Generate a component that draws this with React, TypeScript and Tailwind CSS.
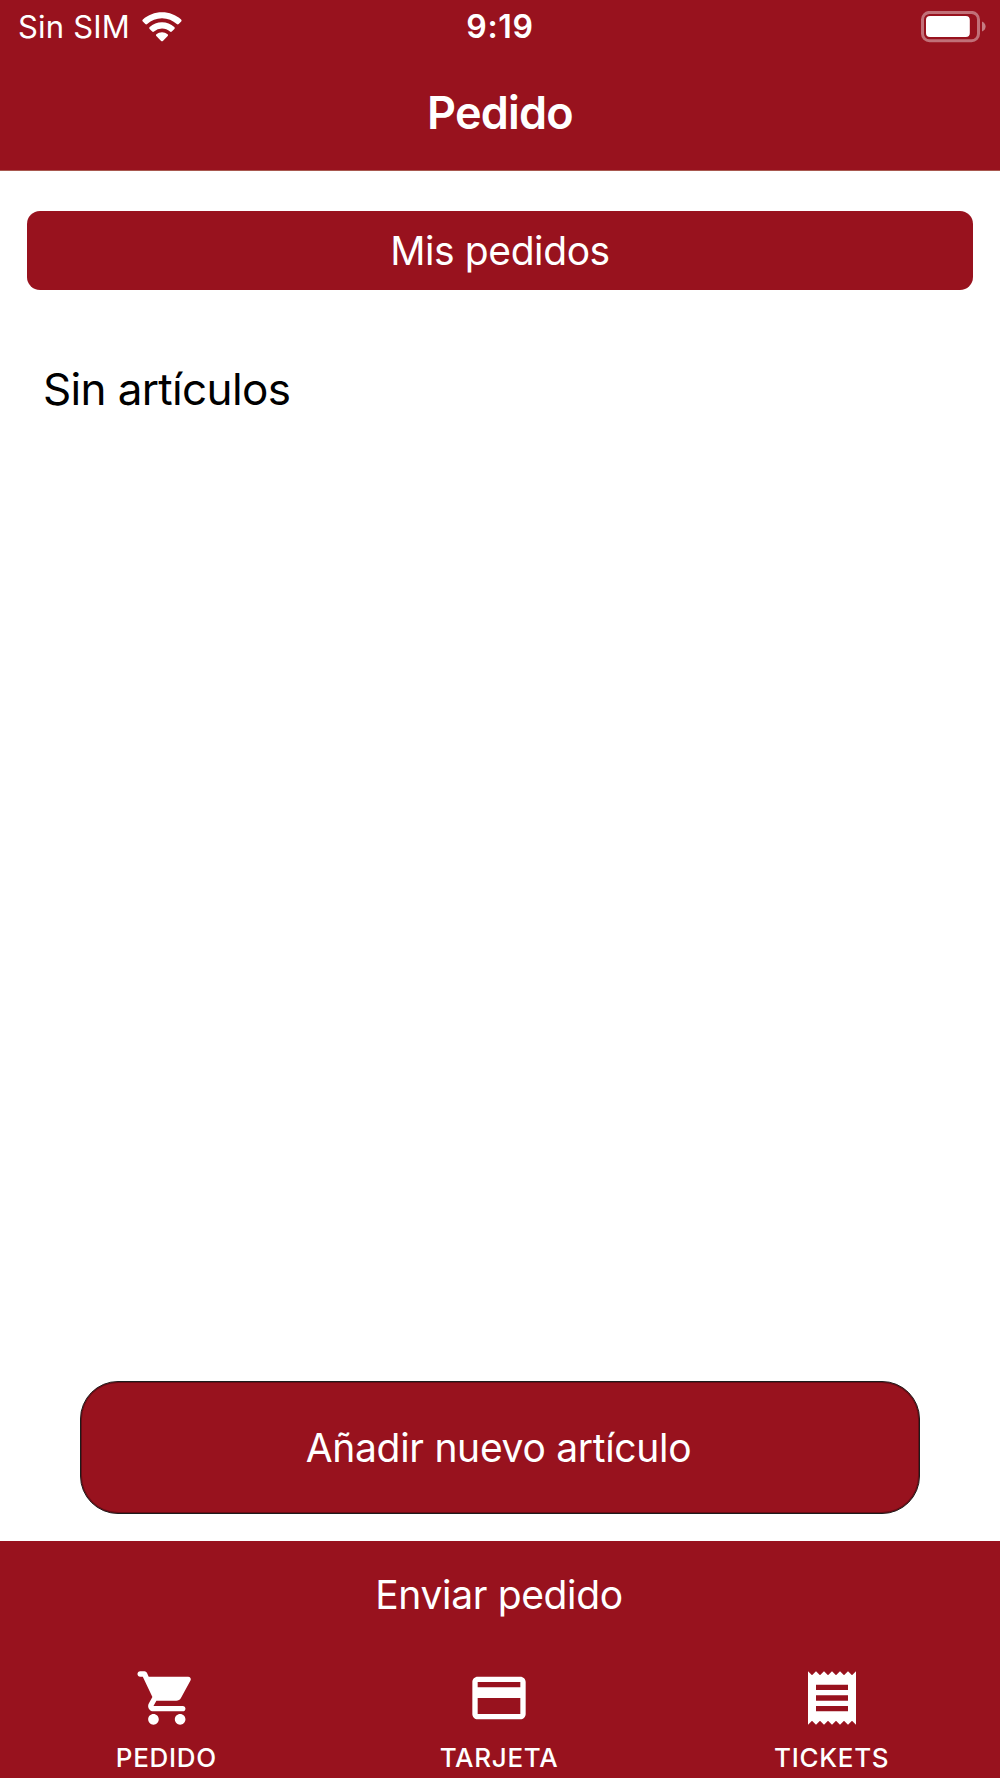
import { MdCreditCard, MdReceipt } from "react-icons/md";

function WifiIcon() {
  return (
    <svg className="h-[30px] w-10" viewBox="0 0 40 30" fill="#fff">
      <path d="M20 .3C12.700 .3 6 3 .9 7.500a1.300 1.300 0 0 0-.1 1.900l2.500 2.600c.6.500 1.300.5 1.900 0A22.200 22.200 0 0 1 20 6.200c5.700 0 10.800 2.200 14.800 5.800.6.500 1.300.5 1.900 0l2.500-2.600c.5-.6.5-1.400-.1-1.900C34 3 27.300.3 20 .3z" />
      <path d="M20 10.300c-4.700 0-9 1.800-12.300 4.700-.6.600-.6 1.300-.1 1.900l2.600 2.600c.5.500 1.200.5 1.800.1A12.200 12.200 0 0 1 20 16.400c3 0 5.800 1.200 8 3.200.6.400 1.300.4 1.800-.1l2.600-2.600c.5-.6.500-1.300-.1-1.900A18.500 18.500 0 0 0 20 10.300z" />
      <path d="M20 20.300c-2.100 0-4.100.8-5.600 2-.6.500-.6 1.100-.1 1.600l4.800 5c.6.600 1.200.6 1.800 0l4.800-5c.5-.5.5-1.100-.1-1.600a8.800 8.800 0 0 0-5.600-2z" />
    </svg>
  );
}

function BatteryIcon() {
  return (
    <svg className="h-8 w-[67px]" viewBox="0 0 67 32">
      <rect x="2.500" y="1.400" width="56" height="28.400" rx="7" fill="none" stroke="#fff" strokeOpacity=".4" strokeWidth="3" />
      <rect x="6" y="5" width="43.800" height="21" rx="4" fill="#fff" />
      <path d="M62 10.500c2.500 1 3.600 3 3.600 5s-1.100 4-3.600 5z" fill="#fff" fillOpacity=".45" />
    </svg>
  );
}

function CartIcon({ className }: { className?: string }) {
  return (
    <svg className={className} viewBox="-0.3 0 24 24" fill="currentColor">
      <path d="M7 18c-1.100 0-1.990.9-1.990 2S5.900 22 7 22s2-.9 2-2-.9-2-2-2zM1 3c0 .55.45 1 1 1h1l3.600 7.590-1.350 2.440C4.520 15.370 5.480 17 7 17h11c.55 0 1-.45 1-1s-.45-1-1-1H7l1.100-2h7.450c.75 0 1.410-.41 1.750-1.030l3.580-6.490A.996.996 0 0 0 20.010 4H5.210l-.67-1.430a.993.993 0 0 0-.9-.57H2c-.55 0-1 .45-1 1zm16 15c-1.100 0-1.990.9-1.990 2s.89 2 1.990 2 2-.9 2-2-.9-2-2-2z" />
    </svg>
  );
}

const tabs = [
  { label: "PEDIDO", icon: CartIcon },
  { label: "TARJETA", icon: MdCreditCard },
  { label: "TICKETS", icon: MdReceipt },
];

export default function App() {
  return (
    <div className="flex h-[1778px] w-[1000px] flex-col overflow-hidden bg-white font-[Inter,sans-serif] text-white">
      {/* Status bar + title */}
      <header className="h-[171px] border-b border-[#a8584f] bg-[#98121e]">
        <div className="grid h-[54px] grid-cols-3 items-center">
          <div className="flex items-center gap-3 pl-[18px]">
            <span className="text-[31px] leading-[54px] tracking-[0.2px]">Sin SIM</span>
            <WifiIcon />
          </div>
          <span className="text-center text-[32px] leading-[54px] font-semibold tracking-[0.7px]">9:19</span>
          <div className="flex justify-end pr-[13px]">
            <BatteryIcon />
          </div>
        </div>
        <h1 className="pt-8 text-center text-[45px] leading-[54px] font-semibold tracking-[-0.8px]">Pedido</h1>
      </header>

      <main className="flex flex-1 flex-col">
        <button className="mx-[27px] mt-10 h-[79px] rounded-[13px] bg-[#98121e] pt-px text-[39px] leading-[78px] tracking-[-0.4px]">
          Mis pedidos
        </button>
        <p className="mt-[72px] pl-[43px] text-[44px] leading-[54px] tracking-[-0.65px] text-black">Sin artículos</p>
        <button className="mx-20 mt-auto mb-[27px] h-[133px] rounded-[38px] border border-[#1c1c1c] bg-[#98121e] pt-px pr-[3px] text-[39px] tracking-[-0.3px] shadow-[inset_0_0_0_1px_#6a0c15]">
          Añadir nuevo artículo
        </button>
      </main>

      {/* Send order + tab bar */}
      <footer className="flex h-[237px] flex-col bg-[#98121e]">
        <button className="h-[110px] pr-[2px] pb-[2px] text-[39px] tracking-[-0.35px]">Enviar pedido</button>
        <nav className="grid grid-cols-3 pt-[15px] pr-[2px]">
          {tabs.map(({ label, icon: Icon }) => (
            <a key={label} className="flex flex-col items-center">
              <Icon className="size-16" />
              <span className="mt-3 text-[26px] leading-8 font-medium tracking-[0.7px]">{label}</span>
            </a>
          ))}
        </nav>
      </footer>
    </div>
  );
}
